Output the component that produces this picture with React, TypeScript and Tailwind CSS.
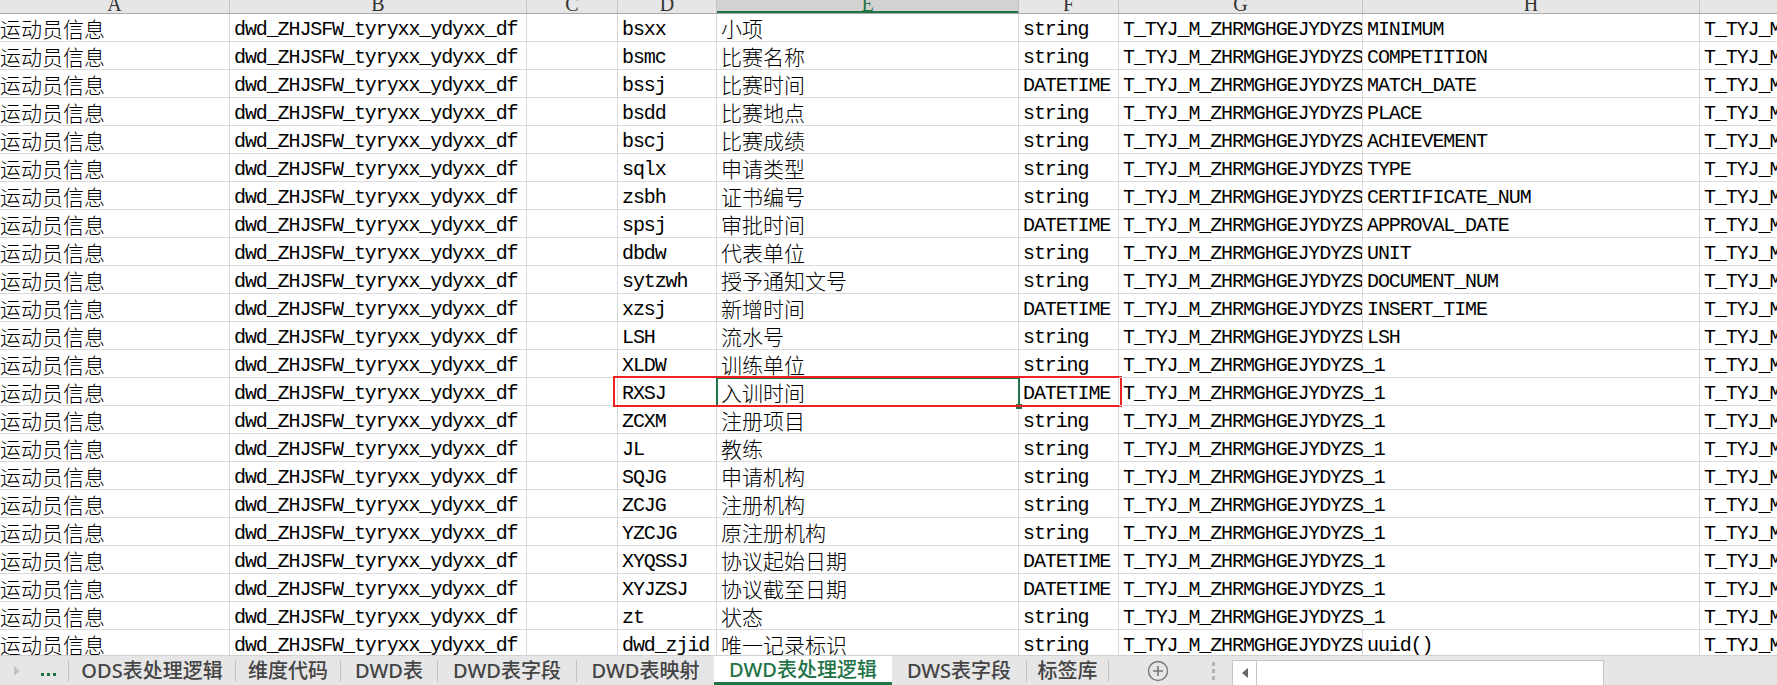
import React from 'react';

const COLS = [
  { key: 'A', w: 230 },
  { key: 'B', w: 297 },
  { key: 'C', w: 91 },
  { key: 'D', w: 99 },
  { key: 'E', w: 302 },
  { key: 'F', w: 100 },
  { key: 'G', w: 244 },
  { key: 'H', w: 337 },
  { key: 'I', w: 300 },
];

const G0 = 'T_TYJ_M_ZHRMGHGEJYDYZS';
const G1 = 'T_TYJ_M_ZHRMGHGEJYDYZS_1';

// [code, name, type, table, field]
const ROWS: [string, string, string, string, string][] = [
  ['bsxx', '小项', 'string', G0, 'MINIMUM'],
  ['bsmc', '比赛名称', 'string', G0, 'COMPETITION'],
  ['bssj', '比赛时间', 'DATETIME', G0, 'MATCH_DATE'],
  ['bsdd', '比赛地点', 'string', G0, 'PLACE'],
  ['bscj', '比赛成绩', 'string', G0, 'ACHIEVEMENT'],
  ['sqlx', '申请类型', 'string', G0, 'TYPE'],
  ['zsbh', '证书编号', 'string', G0, 'CERTIFICATE_NUM'],
  ['spsj', '审批时间', 'DATETIME', G0, 'APPROVAL_DATE'],
  ['dbdw', '代表单位', 'string', G0, 'UNIT'],
  ['sytzwh', '授予通知文号', 'string', G0, 'DOCUMENT_NUM'],
  ['xzsj', '新增时间', 'DATETIME', G0, 'INSERT_TIME'],
  ['LSH', '流水号', 'string', G0, 'LSH'],
  ['XLDW', '训练单位', 'string', G1, ''],
  ['RXSJ', '入训时间', 'DATETIME', G1, ''],
  ['ZCXM', '注册项目', 'string', G1, ''],
  ['JL', '教练', 'string', G1, ''],
  ['SQJG', '申请机构', 'string', G1, ''],
  ['ZCJG', '注册机构', 'string', G1, ''],
  ['YZCJG', '原注册机构', 'string', G1, ''],
  ['XYQSSJ', '协议起始日期', 'DATETIME', G1, ''],
  ['XYJZSJ', '协议截至日期', 'DATETIME', G1, ''],
  ['zt', '状态', 'string', G1, ''],
  ['dwd_zjid', '唯一记录标识', 'string', G0, 'uuid()'],
];

const latin = "font-['Liberation_Mono',monospace] text-[20px] tracking-[-1.1px] leading-[28px] pt-[2px]";
const cjk = "font-['Noto_Sans_CJK_SC',sans-serif] font-light text-[21px] leading-[28px]";

const Cell = ({ w, text, kind, spill, first }: { w: number; text: string; kind: 'l' | 'c'; spill?: boolean; first?: boolean }) => (
  <div
    style={{ width: w }}
    className={`h-[28px] shrink-0 border-b border-[#d9d9d9] whitespace-nowrap text-black ${
      spill ? 'overflow-visible relative z-10' : 'overflow-hidden border-r'
    } ${first ? 'pl-0' : 'pl-[4px]'} ${kind === 'l' ? latin : cjk}`}
  >
    {text}
  </div>
);

const Sep = () => <div className="w-px h-[22px] bg-[#c3c3c3] shrink-0" />;

const Tab = ({ w, label }: { w: number; label: string }) => (
  <div style={{ width: w }} className="shrink-0 h-full flex items-center justify-center text-[#444] text-[20px] font-medium">
    {label}
  </div>
);

export default function App() {
  return (
    <div className="w-[1777px] h-[685px] overflow-hidden bg-white flex flex-col">
      {/* column headers */}
      <div className="flex h-[14px] shrink-0 bg-[#e6e6e6] border-b border-[#ababab]">
        {COLS.map((c) => {
          const sel = c.key === 'E';
          return (
            <div
              key={c.key}
              style={{ width: c.w }}
              className={`shrink-0 overflow-hidden flex justify-center border-r border-[#c4c4c4] font-['Liberation_Serif',serif] text-[20px] ${
                sel ? 'bg-[#d2d2d2] text-[#217346] border-b-2 border-b-[#217346]' : 'text-[#333]'
              }`}
            >
              <span className="leading-[20px] -mt-[6px]">{c.key}</span>
            </div>
          );
        })}
      </div>

      {/* grid */}
      <div className="relative flex-1 overflow-hidden">
        {ROWS.map(([code, name, type, table, field], i) => (
          <div key={i} className="flex h-[28px]">
            <Cell w={230} text="运动员信息" kind="c" first />
            <Cell w={297} text="dwd_ZHJSFW_tyryxx_ydyxx_df" kind="l" />
            <Cell w={91} text="" kind="l" />
            <Cell w={99} text={code} kind="l" />
            <Cell w={302} text={name} kind="c" />
            <Cell w={100} text={type} kind="l" />
            <Cell w={244} text={table} kind="l" spill={field === ''} />
            <Cell w={337} text={field} kind="l" />
            <Cell w={300} text="T_TYJ_M_ZHRMGHGEJYDYZS" kind="l" />
          </div>
        ))}

        {/* active cell */}
        <div className="absolute left-[716px] top-[363px] w-[304px] h-[30px] border-2 border-[#217346]" />
        <div className="absolute left-[1016px] top-[390px] w-[6px] h-[5px] bg-[#217346]" />
        {/* annotation box */}
        <div className="absolute left-[613px] top-[362px] w-[509px] h-[31px] border-2 border-[#ee2222]" />
      </div>

      {/* sheet tabs */}
      <div className="h-[30px] shrink-0 flex items-center bg-[#e6e6e6] border-t border-[#d0d0d0] font-['Noto_Sans','Noto_Sans_CJK_SC',sans-serif]">
        <div className="w-[68px] shrink-0 flex items-center h-full">
          <svg width="6" height="10" viewBox="0 0 6 10" className="ml-[14px]">
            <polygon points="0,0 6,5 0,10" fill="#c4c4c4" />
          </svg>
          <div className="ml-[21px] flex gap-[3px] items-end pt-[8px]">
            <div className="w-[3px] h-[3px] bg-[#217346]" />
            <div className="w-[3px] h-[3px] bg-[#217346]" />
            <div className="w-[3px] h-[3px] bg-[#217346]" />
          </div>
        </div>
        <Sep />
        <Tab w={166} label="ODS表处理逻辑" />
        <Sep />
        <Tab w={104} label="维度代码" />
        <Sep />
        <Tab w={96} label="DWD表" />
        <Sep />
        <Tab w={138} label="DWD表字段" />
        <Sep />
        <Tab w={137} label="DWD表映射" />
        <div className="w-[178px] shrink-0 h-full bg-white border-b-[3px] border-[#217346] flex items-center justify-center text-[#217346] text-[20px] font-medium pt-[2px]">
          DWD表处理逻辑
        </div>
        <Tab w={134} label="DWS表字段" />
        <Sep />
        <Tab w={81} label="标签库" />
        <Sep />
        <div className="w-[123px] shrink-0 flex items-center h-full">
          <svg width="22" height="22" viewBox="0 0 22 22" className="ml-[38px] shrink-0">
            <circle cx="11" cy="11" r="9.5" fill="none" stroke="#777" strokeWidth="1.4" />
            <path d="M11 6v10M6 11h10" stroke="#777" strokeWidth="1.6" />
          </svg>
          <div className="ml-[43px] flex flex-col gap-[3px] shrink-0">
            <div className="w-[3px] h-[4px] bg-[#b5b5b5]" />
            <div className="w-[3px] h-[4px] bg-[#b5b5b5]" />
            <div className="w-[3px] h-[4px] bg-[#b5b5b5]" />
          </div>
        </div>
        <div className="self-end w-[372px] h-[25px] bg-white border border-b-0 border-[#c6c6c6] flex shrink-0">
          <div className="w-[24px] h-full border-r border-[#c6c6c6] flex items-center justify-center">
            <svg width="6" height="10" viewBox="0 0 6 10">
              <polygon points="6,0 0,5 6,10" fill="#666" />
            </svg>
          </div>
        </div>
      </div>
    </div>
  );
}
